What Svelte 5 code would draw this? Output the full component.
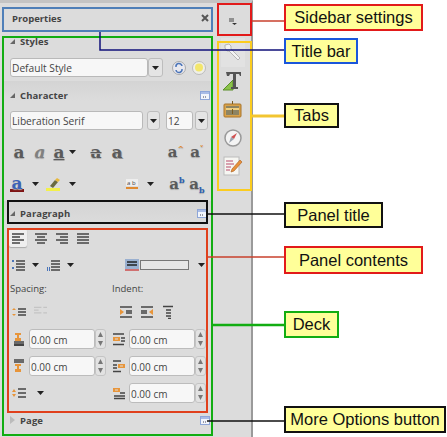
<script>
	const callouts = [
		{ text: "Sidebar settings", cls: "red", x: 284, y: 4, w: 139, h: 27 },
		{ text: "Title bar", cls: "blue", x: 284, y: 38, w: 74, h: 26 },
		{ text: "Tabs", cls: "black", x: 284, y: 103, w: 55, h: 25 },
		{ text: "Panel title", cls: "black", x: 284, y: 202, w: 99, h: 26 },
		{ text: "Panel contents", cls: "red", x: 284, y: 246, w: 139, h: 28 },
		{ text: "Deck", cls: "green", x: 284, y: 311, w: 55, h: 27 },
		{ text: "More Options button", cls: "black", x: 284, y: 406, w: 162, h: 27 }
	];
	const frames = [
		{ cls: "f-blue", x: 2, y: 7, w: 211, h: 25 },
		{ cls: "f-green", x: 2, y: 36, w: 211, h: 400 },
		{ cls: "f-red", x: 217, y: 3, w: 35, h: 33 },
		{ cls: "f-yellow", x: 217, y: 41, w: 35, h: 150 },
		{ cls: "f-black", x: 7, y: 200, w: 201, h: 24 },
		{ cls: "f-orange", x: 7, y: 228, w: 201, h: 185 }
	];

	// dark strokes and orange bits of the small paragraph icons, 14x14 box
	const icons = {
		bullets: { dark: "M5 3h9M5 6h9M5 9h9M5 12h9", orange: "", blue: "M1 2h2v2H1zM1 9h2v2H1z" },
		numbers: { dark: "M5 3h9M5 6h9M5 9h9M5 12h9", orange: "", blue: "M1 9h1v4H1zM3 9h1v4H3z" },
		increase: { dark: "M6 4h8M6 7h8M6 10h8", orange: "M2 3l2 2H0zM2 11l2-2H0z", blue: "" },
		above: { dark: "M2 10h10M2 12h10M2 13.500h10", orange: "M3 1h6v2H7v3h2v3H3V6h2V3H3z", blue: "" },
		below: { dark: "M2 1h10M2 3h10", orange: "M3 5h6v2H7v3h2v3H3v-3h2V7H3z", blue: "" },
		indentBefore: { dark: "M1 2h11M9 6h4M9 9h4M1 12.500h11", orange: "M1 5h7v4H1zM3 6.500v1h3v-1z", blue: "" },
		indentAfter: { dark: "M1 2h8M1 6h4M1 9h4M1 12.500h8", orange: "M6 5h7v4H6zM8 6.500v1h3v-1z", blue: "" },
		firstLine: { dark: "M8 7h5M2 10h11M2 12.500h11", orange: "M1 2h7v4H1zM3 3.500v1h3v-1z", blue: "" },
		incPara: { dark: "M1 2h12M7 6h6M7 8h6M1 12h12", orange: "M1 4l4 3-4 3z", blue: "" },
		decPara: { dark: "M1 2h12M1 6h6M1 8h6M1 12h12", orange: "M13 4L9 7l4 3z", blue: "" },
		hanging: { dark: "M2 1.500h10M5 5h5M5 8h5M5 11h5M7 13.500h3", orange: "", blue: "" },
		lineSpace: { dark: "M6 3h8M6 7h8M6 11h8", orange: "M0 6l2-3 2 3zM0 8h4l-2 3z", blue: "" }
	};
</script>

{#snippet arrow()}
	<svg class="arrow" width="7" height="4" viewBox="0 0 7 4"><path d="M0 0h7L3.500 4z" fill="#222" /></svg>
{/snippet}

{#snippet more()}
	<svg class="more" width="10" height="9" viewBox="0 0 10 9">
		<rect x=".5" y=".5" width="9" height="8" fill="#f2f5fb" stroke="#8ea6d8" />
		<rect x="1" y="1" width="8" height="2" fill="#a9bce6" />
		<path d="M3 6h1M5 6h1" stroke="#445" />
	</svg>
{/snippet}

{#snippet icon(name)}
	<svg class="icon" width="14" height="14" viewBox="0 0 14 14">
		<path d={icons[name].dark} stroke="#444" stroke-width="1.300" fill="none" />
		{#if icons[name].orange}<path d={icons[name].orange} fill="#e8953a" fill-rule="evenodd" />{/if}
		{#if icons[name].blue}<path d={icons[name].blue} fill="#4a74b8" />{/if}
	</svg>
{/snippet}

{#snippet spin(text = "0.00 cm")}
	<span class="spin">
		<span class="field">{text}</span>
		<span class="updown">
			<svg width="5" height="14" viewBox="0 0 5 14"><path d="M0 5l2.500-5 2.500 5zM0 9h5l-2.500 5z" fill="#777" /></svg>
		</span>
	</span>
{/snippet}

<div class="page">
	<div class="sidebar">
		<div class="deck-col">
			<div class="titlebar">
				<span>Properties</span>
				<svg width="8" height="8" viewBox="0 0 8 8"><path d="M1 1l6 6M7 1L1 7" stroke="#555" stroke-width="2" /></svg>
			</div>

			<section class="panel styles">
				<h3><i class="tri"></i>Styles</h3>
				<div class="row r-style">
					<span class="combo" style="width:138px">Default Style</span>
					<span class="btn">{@render arrow()}</span>
					<svg class="ml16" width="14" height="14" viewBox="0 0 14 14">
						<circle cx="7" cy="7" r="6.500" fill="#e8e8ee" stroke="#aaa" />
						<path d="M4 6a3 3 0 0 1 6-1M10 8a3 3 0 0 1-6 1" fill="none" stroke="#4a74b8" stroke-width="1.500" />
					</svg>
					<svg class="ml6" width="14" height="14" viewBox="0 0 14 14">
						<circle cx="7" cy="7" r="6.500" fill="#efefe8" stroke="#bbb" />
						<circle cx="7" cy="6.500" r="4" fill="#f3e66c" />
					</svg>
				</div>
			</section>

			<section class="panel character">
				<h3><i class="tri"></i>Character {@render more()}</h3>
				<div class="row r-font">
					<span class="combo" style="width:133px">Liberation Serif</span>
					<span class="btn" style="width:13px;margin-left:4px">{@render arrow()}</span>
					<span class="combo" style="width:27px;margin-left:6px">12</span>
					<span class="btn" style="width:13px;margin-left:2px">{@render arrow()}</span>
				</div>
				<div class="row r-tool r1">
					<span class="glyph">a</span>
					<span class="glyph it">a</span>
					<span class="glyph ul">a</span>
					{@render arrow()}
					<span class="glyph st">a</span>
					<span class="glyph sh">a</span>
					<span class="grow"></span>
					<span class="glyph sm">a<sup>^</sup></span>
					<span class="glyph sm">a<sup>˅</sup></span>
				</div>
				<div class="row r-tool r2">
					<span class="glyph col">a</span>
					{@render arrow()}
					<svg class="pen" width="15" height="14" viewBox="0 0 15 14">
						<path d="M4 9l5-6 3 2-5 6z" fill="#6a6a40" />
						<path d="M9 3l2-2 3 2-2 2z" fill="#e8b83a" />
						<rect y="11" width="14" height="3" fill="#f3f04a" />
					</svg>
					{@render arrow()}
					<span class="grow"></span>
					<svg width="14" height="13" viewBox="0 0 14 13">
						<rect x="1" y="1" width="12" height="7" fill="#eee" />
						<text x="2" y="7" font-size="6" font-family="Open Sans" fill="#444">a b</text>
						<path d="M1 10h12" stroke="#e08a30" stroke-width="2" />
					</svg>
					{@render arrow()}
					<span class="glyph sm up">a<sup>b</sup></span>
					<span class="glyph sm dn">a<sub>b</sub></span>
				</div>
			</section>

			<section class="panel paragraph">
				<h3><i class="tri"></i>Paragraph {@render more()}</h3>
				<div class="contents">
					<div class="row r-align">
						<span class="pressed">
							<svg width="12" height="11" viewBox="0 0 12 11"><path d="M0 1h12M0 4h8M0 7h12M0 10h8" stroke="#444" stroke-width="1.500" /></svg>
						</span>
						<svg width="12" height="11" viewBox="0 0 12 11"><path d="M0 1h12M2 4h8M0 7h12M2 10h8" stroke="#444" stroke-width="1.500" /></svg>
						<svg width="12" height="11" viewBox="0 0 12 11"><path d="M0 1h12M4 4h8M0 7h12M4 10h8" stroke="#444" stroke-width="1.500" /></svg>
						<svg width="12" height="11" viewBox="0 0 12 11"><path d="M0 1h12M0 4h12M0 7h12M0 10h12" stroke="#444" stroke-width="1.500" /></svg>
					</div>
					<div class="row r-list">
						{@render icon("bullets")}
						{@render arrow()}
						{@render icon("numbers")}
						{@render arrow()}
						<span class="grow"></span>
						<svg class="bar" width="14" height="12" viewBox="0 0 14 12">
							<rect width="14" height="10" fill="#9ab0d0" />
							<path d="M2 3h10M2 6h10" stroke="#222" stroke-width="1.500" />
							<rect y="10" width="14" height="2" fill="#d07070" />
						</svg>
						<span class="swatch"></span>
						{@render arrow()}
					</div>
					<div class="labels"><span>Spacing:</span><span>Indent:</span></div>
					<div class="row r-icons">
						<span class="left-icons">
							{@render icon("increase")}
							<svg class="faded" width="13" height="12" viewBox="0 0 14 12"><path d="M0 2h8M0 5h5M0 8h8M10 2h4M10 8h4" stroke="#bbb" stroke-width="1.400" /></svg>
						</span>
						<span class="right-icons">
							{@render icon("incPara")}
							{@render icon("decPara")}
							{@render icon("hanging")}
						</span>
					</div>
					<div class="spins">
						<span class="cell">{@render icon("above")}{@render spin()}</span>
						<span class="cell">{@render icon("indentBefore")}{@render spin()}</span>
						<span class="cell">{@render icon("below")}{@render spin()}</span>
						<span class="cell">{@render icon("indentAfter")}{@render spin()}</span>
						<span class="cell line">{@render icon("lineSpace")}{@render arrow()}</span>
						<span class="cell">{@render icon("firstLine")}{@render spin()}</span>
					</div>
				</div>
			</section>

			<section class="panel page-panel">
				<h3><i class="tri closed"></i>Page {@render more()}</h3>
			</section>
		</div>

		<div class="tabs">
			<svg class="settings" width="8" height="7" viewBox="0 0 8 7"><path d="M0 1h5M0 3h5" stroke="#444" stroke-width="1.200" /><path d="M3 5h5L5.500 7z" fill="#333" /></svg>
			<span class="tab active">
				<svg width="20" height="20" viewBox="0 0 20 20"><path d="M2 3l4-1 2 2v3l9 9-2 2-9-9H4L2 6z" fill="#f3f3f3" stroke="#b5b5b5" /></svg>
			</span>
			<span class="tab">
				<svg width="20" height="20" viewBox="0 0 20 20">
					<path d="M0 19L10 9v10z" fill="#8bc34a" stroke="#5b8e2a" />
					<path d="M3 1h15v4h-1l-1-2h-3v13h2v2H8v-2h2V3H7L6 5H4z" fill="#555" />
				</svg>
			</span>
			<span class="tab">
				<svg width="19" height="19" viewBox="0 0 19 19">
					<rect x="1" y="4" width="17" height="13" rx="1" fill="#d9a24a" stroke="#a8752a" />
					<rect x="3" y="6" width="13" height="9" fill="#8d8463" />
					<path d="M3 9l13 0" stroke="#f0d080" stroke-width="2" />
					<path d="M9.500 1v3M9.500 9v5" stroke="#7a5a20" />
				</svg>
			</span>
			<span class="tab">
				<svg width="18" height="18" viewBox="0 0 18 18">
					<circle cx="9" cy="9" r="8" fill="#f4f4f4" stroke="#999" stroke-width="1.500" />
					<path d="M13 4l-6 4 3 2z" fill="#d05050" /><path d="M5 14l2-6 3 2z" fill="#9aa4b0" />
				</svg>
			</span>
			<span class="tab">
				<svg width="20" height="20" viewBox="0 0 20 20">
					<rect x="1" y="1" width="15" height="18" fill="#f6f6f2" stroke="#bbb" />
					<path d="M3 5h7M3 8h8M3 11h5M3 14h4" stroke="#b84a6a" />
					<path d="M17 4l2 2-8 9-3 1 1-3z" fill="#e8913a" stroke="#a85c1c" stroke-width=".6" />
				</svg>
			</span>
		</div>
	</div>

	{#each frames as f}
		<div class="frame {f.cls}" style="left:{f.x}px;top:{f.y}px;width:{f.w}px;height:{f.h}px"></div>
	{/each}

	<svg class="leaders" width="447" height="437" viewBox="0 0 447 437">
		<path d="M252 21h32" stroke="#c8402c" stroke-width="1.500" fill="none" />
		<path d="M100 32v18h184" stroke="#10107a" stroke-width="1.500" fill="none" />
		<path d="M252 116h32" stroke="#f2c531" stroke-width="3" fill="none" />
		<path d="M208 214h76" stroke="#111" stroke-width="1.500" fill="none" />
		<path d="M208 257h76" stroke="#c8402c" stroke-width="1.500" fill="none" />
		<path d="M213 325h71" stroke="#12ad12" stroke-width="2.500" fill="none" />
		<path d="M207 421h77" stroke="#111" stroke-width="1.500" fill="none" />
	</svg>

	{#each callouts as c}
		<div class="callout {c.cls}" style="left:{c.x}px;top:{c.y}px;width:{c.w}px;height:{c.h}px">{c.text}</div>
	{/each}
</div>

<style>
	:global(body) {
		background: #fff;
	}
	.page {
		position: relative;
		width: 447px;
		height: 437px;
		overflow: hidden;
		background: #fff;
		font-family: "Open Sans", sans-serif;
		color: #333;
	}
	.sidebar {
		display: flex;
		box-sizing: border-box;
		width: 253px;
		height: 437px;
		background: #dcdcdc;
		border-top: 3px solid #c4c4c4;
		border-right: 2px solid #9a9a9a;
	}
	.deck-col {
		width: 214px;
		flex: none;
		padding: 4px 0 0 4px;
		box-sizing: border-box;
	}
	.titlebar {
		display: flex;
		justify-content: space-between;
		align-items: center;
		box-sizing: border-box;
		height: 26px;
		padding: 0 3px 4px 8px;
		margin-right: 2px;
		font-size: 9.500px;
		font-weight: 700;
		color: #444;
	}
	h3 {
		position: relative;
		display: flex;
		align-items: center;
		margin: 0;
		font-size: 9.500px;
		font-weight: 700;
		color: #444;
		letter-spacing: 0.100px;
	}
	.tri {
		width: 0;
		height: 0;
		margin: 0 5px 0 6px;
		border-top: 5px solid transparent;
		border-right: 5px solid #666;
	}
	.tri.closed {
		border-top: 4px solid transparent;
		border-bottom: 4px solid transparent;
		border-left: 5px solid #bbb;
		border-right: 0;
	}
	.more {
		position: absolute;
		right: 4px;
		top: 50%;
		margin-top: -4px;
	}
	.panel {
		background: #dcdcdc;
	}
	.styles {
		box-sizing: border-box;
		height: 48px;
		padding-top: 2px;
	}
	.styles h3 {
		height: 12px;
		margin-bottom: 11px;
	}
	.character {
		position: relative;
		height: 117px;
		background: linear-gradient(#d4d4d4 0, #dcdcdc 20px);
	}
	.character h3 {
		height: 26px;
		padding-top: 1px;
		margin-bottom: 3px;
	}
	.row {
		display: flex;
		align-items: center;
		padding-left: 6px;
	}
	.combo {
		display: flex;
		align-items: center;
		box-sizing: border-box;
		height: 19px;
		padding-left: 1px;
		background: #f7f7f7;
		border: 1px solid #b9b9b9;
		border-radius: 3px;
		font-size: 10.200px;
		color: #444;
	}
	.btn {
		display: flex;
		align-items: center;
		justify-content: center;
		box-sizing: border-box;
		width: 15px;
		height: 19px;
		background: #e4e4e4;
		border: 1px solid #bdbdbd;
		border-radius: 3px;
	}
	.ml16 {
		margin-left: 9px;
	}
	.ml6 {
		margin-left: 6px;
	}
	.r-style,
	.r-font {
		height: 19px;
	}
	.r-font {
		margin-top: 1px;
	}
	.r-tool {
		height: 16px;
		padding-right: 8px;
	}
	.r1 {
		margin-top: 14px;
		gap: 3px;
	}
	.r2 {
		margin-top: 16px;
		gap: 8px;
	}
	.glyph {
		width: 18px;
		text-align: center;
		font-family: "DejaVu Serif", serif;
		font-weight: 700;
		font-size: 17px;
		line-height: 15px;
		color: #5a5a5a;
		text-shadow: 0 1px 1px #aaa;
	}
	.glyph.it {
		font-style: italic;
		color: #808080;
	}
	.glyph.ul {
		text-decoration: underline;
		width: 14px;
	}
	.glyph.st {
		text-decoration: line-through;
		margin-left: 8px;
	}
	.glyph.sh {
		text-shadow: 1px 1px 0 #999;
	}
	.glyph.sm {
		width: 18px;
		font-size: 15px;
		white-space: nowrap;
	}
	.glyph sup,
	.glyph sub {
		font-size: 8px;
		line-height: 0;
		color: #e08a30;
	}
	.glyph.up sup,
	.glyph.dn sub {
		color: #2c60b0;
	}
	.glyph.up {
		margin-left: 6px;
	}
	.glyph.dn {
		margin-left: -6px;
	}
	.glyph.col {
		color: #3c62b8;
		border-bottom: 3px solid #7d1414;
		line-height: 12px;
		width: 14px;
	}
	.grow {
		flex: 1;
	}
	.pen {
		margin-left: -1px;
	}
	.paragraph {
		padding-top: 3px;
	}
	.paragraph h3 {
		height: 24px;
		margin: 0 3px 0 0;
		background: linear-gradient(#d4d4d4, #dcdcdc);
	}
	.contents {
		height: 180px;
		margin: 4px 3px 0;
	}
	.r-align {
		gap: 9px;
		height: 18px;
		padding-left: 4px;
		margin-bottom: 6px;
	}
	.r-align .pressed {
		display: flex;
		align-items: center;
		justify-content: center;
		width: 18px;
		height: 18px;
		margin: 0 -1px 0 -2px;
		background: #efefef;
		border-radius: 2px;
		box-shadow: 0 1px 1px #aaa;
	}
	.r-list {
		gap: 7px;
		height: 14px;
		margin-top: 11px;
		padding: 0 6px 0 4px;
	}
	.bar {
		margin-right: -6px;
	}
	.swatch {
		box-sizing: border-box;
		width: 49px;
		height: 10px;
		margin-right: 2px;
		background: #e6e6e6;
		border: 1px solid #777;
	}
	.labels {
		display: grid;
		grid-template-columns: 102px 1fr;
		padding: 10px 0 0 3px;
		font-size: 9.500px;
		line-height: 13px;
		color: #444;
	}
	.r-icons {
		height: 12px;
		margin-top: 11px;
		padding-left: 5px;
	}
	.left-icons {
		display: flex;
		gap: 8px;
		width: 107px;
	}
	.right-icons {
		display: flex;
		gap: 7px;
	}
	.faded {
		opacity: 0.7;
	}
	.spins {
		display: grid;
		grid-template-columns: 100px 97px;
		grid-auto-rows: 27px;
		align-items: center;
		margin-top: 7px;
		padding-left: 5px;
	}
	.cell {
		display: flex;
		align-items: center;
		gap: 3px;
	}
	.cell.line {
		gap: 11px;
	}
	.spin {
		display: flex;
		align-items: center;
	}
	.field {
		box-sizing: border-box;
		width: 66px;
		height: 20px;
		padding: 3px 0 0 1px;
		background: #f7f7f7;
		border: 1px solid #bcbcbc;
		border-radius: 3px;
		font-size: 10px;
		color: #444;
	}
	.updown {
		display: flex;
		align-items: center;
		justify-content: center;
		box-sizing: border-box;
		width: 11px;
		height: 20px;
		background: #e2e2e2;
		border: 1px solid #c4c4c4;
		border-radius: 3px;
	}
	.page-panel h3 {
		height: 20px;
		margin-top: 1px;
	}
	.tabs {
		display: flex;
		flex-direction: column;
		align-items: center;
		flex: 1;
	}
	.settings {
		margin-top: 15px;
		margin-bottom: 13px;
	}
	.tab {
		display: flex;
		align-items: center;
		justify-content: center;
		width: 24px;
		height: 28.500px;
	}
	.tab.active {
		background: #e2e2e2;
	}
	.frame {
		position: absolute;
		box-sizing: border-box;
		border: 2.500px solid;
		pointer-events: none;
	}
	.f-blue {
		border-color: #4f7fb8;
	}
	.f-green {
		border-color: #12ad12;
	}
	.f-red {
		border-color: #e21a1a;
	}
	.f-yellow {
		border-color: #fbcc1f;
	}
	.f-black {
		border-color: #111;
	}
	.f-orange {
		border-color: #e0401c;
	}
	.leaders {
		position: absolute;
		left: 0;
		top: 0;
	}
	.callout {
		position: absolute;
		display: flex;
		align-items: center;
		justify-content: center;
		box-sizing: border-box;
		background: #ffff99;
		border: 2px solid #111;
		font-family: "Liberation Sans", sans-serif;
		font-size: 16.500px;
		color: #111;
		white-space: nowrap;
	}
	.callout.red {
		border-color: #e21a1a;
	}
	.callout.blue {
		border-color: #1a56db;
	}
	.callout.green {
		border-color: #12ad12;
	}
</style>
